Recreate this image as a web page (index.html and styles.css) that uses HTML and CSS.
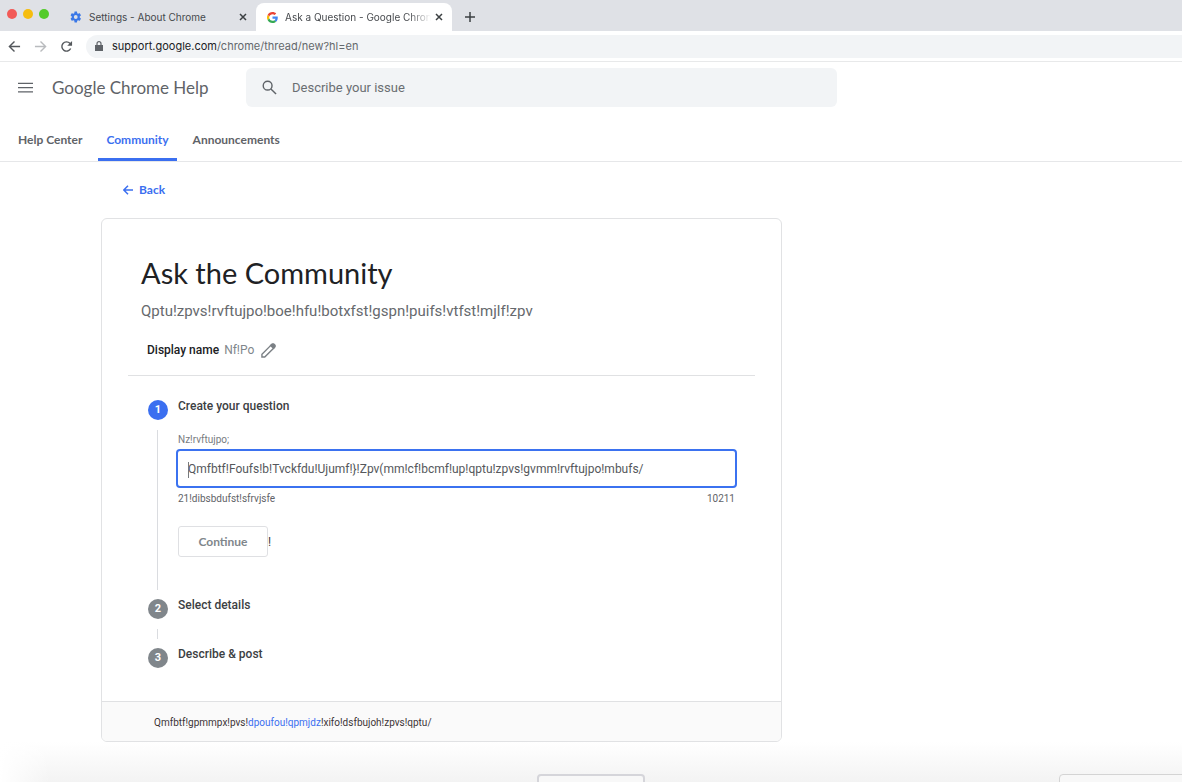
FILE: index.html
```html
<!DOCTYPE html>
<html lang="en">
<head>
<meta charset="utf-8">
<title>Ask a Question - Google Chrome Community</title>
<link rel="stylesheet" href="styles.css">
</head>
<body>
<div class="tabstrip">
  <div class="lights"><i class="light red"></i><i class="light yellow"></i><i class="light green"></i></div>
  <div class="tab">
    <svg class="favicon" viewBox="0 0 24 24"><path fill="#3b78e7" d="M19.4 13c0-.3.1-.6.1-1s0-.7-.1-1l2.300-1.800c.2-.2.3-.5.100-.7l-2.200-3.800c-.1-.2-.4-.3-.7-.2l-2.700 1.100c-.6-.4-1.200-.8-1.800-1L14 1.500c0-.3-.3-.5-.5-.5h-4c-.3 0-.5.200-.5.500l-.4 3.100c-.6.200-1.200.600-1.800 1L4.100 4.500c-.2-.1-.5 0-.7.200L1.300 8.500c-.1.200-.1.500.1.700L3.600 11c0 .3-.1.700-.1 1s0 .7.100 1l-2.200 1.800c-.2.200-.2.500-.1.700l2.100 3.800c.1.200.4.300.7.200l2.700-1.100c.6.400 1.200.8 1.800 1l.4 3.100c0 .3.200.5.500.5h4c.300 0 .500-.2.500-.5l.4-3.100c.6-.2 1.200-.6 1.800-1l2.700 1.100c.2.100.5 0 .7-.2l2.200-3.800c.1-.2.100-.5-.1-.7zM11.500 15.800a3.800 3.800 0 1 1 0-7.600 3.800 3.800 0 0 1 0 7.600z"/></svg>
    <span class="tab-title">Settings - About Chrome</span>
    <button class="close" aria-label="Close tab"><svg viewBox="0 0 8 8"><path d="M1 1l6 6M7 1l-6 6"/></svg></button>
  </div>
  <div class="tab active">
    <svg class="favicon" viewBox="0 0 48 48"><path fill="#ea4335" d="M24 9.500c3.540 0 6.710 1.220 9.210 3.600l6.850-6.850C35.900 2.380 30.470 0 24 0 14.620 0 6.510 5.380 2.560 13.220l7.980 6.190C12.430 13.720 17.740 9.500 24 9.500z"/><path fill="#4285f4" d="M46.980 24.550c0-1.570-.15-3.090-.38-4.550H24v9.020h12.940c-.58 2.960-2.260 5.480-4.780 7.180l7.730 6c4.510-4.180 7.090-10.360 7.090-17.650z"/><path fill="#fbbc05" d="M10.530 28.590a14.500 14.500 0 0 1 0-9.180l-7.980-6.190a24 24 0 0 0 0 21.560z"/><path fill="#34a853" d="M24 48c6.480 0 11.930-2.130 15.890-5.810l-7.730-6c-2.150 1.450-4.920 2.300-8.160 2.300-6.260 0-11.570-4.220-13.470-9.910l-7.980 6.190C6.510 42.620 14.620 48 24 48z"/></svg>
    <span class="tab-title fade">Ask a Question - Google Chron</span>
    <button class="close" aria-label="Close tab"><svg viewBox="0 0 8 8"><path d="M1 1l6 6M7 1l-6 6"/></svg></button>
  </div>
  <button class="new-tab" aria-label="New tab"><svg viewBox="0 0 10 10"><path d="M5 0v10M0 5h10"/></svg></button>
</div>
<div class="toolbar">
  <button class="nav" aria-label="Back"><svg viewBox="0 0 14 14"><path d="M13 7H2M7 1.500L1.500 7 7 12.500"/></svg></button>
  <button class="nav dim" aria-label="Forward"><svg viewBox="0 0 14 14"><path d="M1 7h11M7 1.500L12.500 7 7 12.500"/></svg></button>
  <button class="nav" aria-label="Reload"><svg viewBox="0 0 14 14"><path d="M11.500 9.200A5 5 0 1 1 10.700 3.600L12 5"/><path class="solid" d="M13 1v5.200H7.800z"/></svg></button>
  <div class="omnibox">
    <svg class="lock" viewBox="0 0 8 10"><path d="M0 4h8v6H0z" fill="#5f6368"/><path d="M2 4V2.700a2 2 0 0 1 4 0V4" fill="none" stroke="#5f6368" stroke-width="1.200"/></svg>
    <span class="url"><b>support.google.com</b>/chrome/thread/new?hl=en</span>
  </div>
</div>

<header class="header">
  <button class="menu" aria-label="Main menu"><svg viewBox="0 0 16 12"><path d="M0 1.500h16M0 6h16M0 10.500h16"/></svg></button>
  <span class="product">Google Chrome Help</span>
  <label class="search">
    <svg viewBox="0 0 16 16"><circle cx="6" cy="6" r="4.700"/><path d="M9.500 9.500l5.500 5.500"/></svg>
    <input type="text" placeholder="Describe your issue" aria-label="Describe your issue">
  </label>
</header>
<nav class="sections">
  <a href="#">Help Center</a>
  <a href="#" class="current">Community</a>
  <a href="#">Announcements</a>
</nav>

<main class="main">
  <a href="#" class="back"><svg viewBox="0 0 10 10"><path d="M10 5H1M5 .8L.8 5 5 9.200"/></svg>Back</a>
  <section class="card">
    <div class="intro">
      <h1>Ask the Community</h1>
      <p class="lead">Qptu!zpvs!rvftujpo!boe!hfu!botxfst!gspn!puifs!vtfst!mjlf!zpv</p>
    </div>
    <div class="identity">
      <span class="strong">Display name</span><span class="name">Nf!Po</span>
      <button class="edit" aria-label="Edit display name"><svg viewBox="0 0 16 16"><path d="M1 15v-3L11 2l3 3L4 15z"/><path d="M10.300 2.700L12 1h1.500L15 2.500V4l-1.700 1.700z" class="tip"/></svg></button>
    </div>
    <ol class="steps">
      <li class="step">
        <div class="rail"><span class="badge on">1</span><i class="line"></i></div>
        <div class="body">
          <h2>Create your question</h2>
          <label class="label" for="question">Nz!rvftujpo;</label>
          <div class="field"><input id="question" type="text" value="Qmfbtf!Foufs!b!Tvckfdu!Ujumf!}!Zpv(mm!cf!bcmf!up!qptu!zpvs!gvmm!rvftujpo!mbufs/"><i class="caret"></i></div>
          <div class="hint"><span>21!dibsbdufst!sfrvjsfe</span><span>10211</span></div>
          <div class="actions"><button class="continue">Continue</button><span>!</span></div>
        </div>
      </li>
      <li class="step">
        <div class="rail"><span class="badge">2</span><i class="line"></i></div>
        <div class="body"><h2>Select details</h2></div>
      </li>
      <li class="step">
        <div class="rail"><span class="badge">3</span></div>
        <div class="body"><h2>Describe &amp; post</h2></div>
      </li>
    </ol>
    <footer class="policy">Qmfbtf!gpmmpx!pvs!<a href="#">dpoufou!qpmjdz</a>!xifo!dsfbujoh!zpvs!qptu/</footer>
  </section>
</main>
<div class="dock"><i class="peek"></i><i class="peek side"></i></div>
</body>
</html>
```
FILE: styles.css
```css
* { box-sizing: border-box; }
html, body { height: 100%; }
body {
  margin: 0;
  display: flex;
  flex-direction: column;
  overflow: hidden;
  background: #fff;
  color: #3c4043;
  font-family: Roboto, sans-serif;
  font-size: 12px;
}
button { padding: 0; border: 0; background: none; font: inherit; color: inherit; }
input { font: inherit; color: inherit; }
a { color: #3b6ff0; text-decoration: none; }
svg { display: block; fill: none; stroke-width: 1.500; }
h1, h2, p, ol { margin: 0; padding: 0; }

/* Browser chrome */
.tabstrip { display: flex; flex: none; height: 31px; background: #dfe1e6; font-family: Inter, sans-serif; font-size: 10px; }
.lights { display: flex; gap: 6px; width: 62px; padding: 9px 0 0 7px; }
.light { width: 10px; height: 10px; border-radius: 50%; }
.red { background: #f25a57; }
.yellow { background: #f6bd0f; }
.green { background: #53cb2a; }
.tab { display: flex; align-items: center; width: 194px; padding: 3px 9px 0 8px; }
.active { width: 196px; margin-top: 3px; padding-top: 0; padding-left: 11px; background: #fff; border-radius: 8px 8px 0 0; }
.favicon { flex: none; width: 12px; height: 12px; margin-right: 7px; stroke: none; }
.active .favicon { width: 11px; height: 11px; }
.tab-title { flex: 1; min-width: 0; overflow: hidden; white-space: nowrap; color: #46494d; }
.fade { mask-image: linear-gradient(to right, #000 85%, transparent); }
.close { width: 8px; height: 8px; margin-left: 4px; }
.close svg, .new-tab svg { width: 100%; height: 100%; stroke: #3c4043; }
.new-tab { width: 10px; height: 10px; margin: 12px 0 0 13px; }
.toolbar { display: flex; flex: none; align-items: center; gap: 13px; height: 31px; padding-left: 8px; background: #fff; border-bottom: 1px solid #e8e9ea; }
.nav { width: 13px; height: 13px; stroke: #54585c; }
.nav svg { width: 13px; height: 13px; }
.dim { stroke: #b9bbbe; }
.solid { fill: #54585c; stroke: none; }
.omnibox { display: flex; flex: 1; align-items: center; gap: 9px; height: 23px; padding-left: 9px; background: #f2f4f6; border-radius: 12px 0 0 12px; font-family: Inter, sans-serif; font-size: 11px; color: #64686c; }
.omnibox b { font-weight: 400; color: #202124; }
.lock { width: 8px; height: 10px; }

/* Help site header */
.header { display: flex; flex: none; align-items: center; height: 51px; padding-left: 18px; }
.menu { width: 15px; height: 12px; stroke: #5f6368; }
.product { width: 194px; margin-left: 19px; font-family: Lato, sans-serif; font-size: 17px; color: #5f6368; white-space: nowrap; }
.search { display: flex; flex: 0 1 591px; align-items: center; gap: 15px; height: 39px; padding-left: 16px; border-radius: 6px; background: #f2f4f6; color: #5f6368; }
.search svg { width: 15px; height: 15px; stroke: #5f6368; }
.search input { flex: 1; border: 0; background: none; outline: 0; padding: 0; font-size: 13px; }
.search input::placeholder { color: #6a6e72; opacity: 1; }
.sections { display: flex; flex: none; gap: 8px; height: 49px; padding-left: 10px; border-bottom: 1px solid #e6e7e9; font-family: Lato, sans-serif; font-size: 12px; font-weight: 700; }
.sections a { padding: 19px 8px 0; line-height: 16px; color: #5f6368; white-space: nowrap; }
.sections .current { color: #3b6ff0; box-shadow: inset 0 -3px #3b6ff0; border-radius: 3px 3px 0 0; }

/* Question form */
.main { width: 681px; max-width: calc(100% - 116px); margin-left: 101px; }
.back { display: flex; align-items: center; gap: 6px; width: fit-content; margin: 20px 0 20px 22px; font-family: Lato, sans-serif; font-size: 12px; font-weight: 700; line-height: 16px; }
.back svg { width: 10px; height: 10px; stroke: #3b6ff0; }
.card { border: 1px solid #e1e2e4; border-radius: 6px; overflow: hidden; }
.intro { padding: 36px 39px 0; }
h1 { font-family: Lato, sans-serif; font-size: 29px; font-weight: 400; line-height: 36px; color: #202124; }
.lead { margin-top: 10px; font-size: 15px; line-height: 20px; color: #66696d; }
.identity { display: flex; align-items: center; margin: 16px 26px 24px; padding: 2px 19px 14px; border-bottom: 1px solid #e0e1e3; line-height: 22px; }
.strong { font-weight: 500; color: #202124; }
.name { margin: 0 7px 0 5px; color: #80868b; }
.edit { width: 15px; height: 15px; stroke: #7b8085; }
.tip { fill: #7b8085; }
.steps { padding: 0 46px 33px; list-style: none; }
.step { display: flex; gap: 10px; }
.rail { display: flex; flex-direction: column; align-items: center; width: 20px; }
.badge { width: 20px; height: 20px; border-radius: 50%; background: #80868b; color: #fff; font-size: 11px; font-weight: 700; line-height: 20px; text-align: center; }
.on { background: #3b6ff0; }
.line { flex: 1; width: 1px; min-height: 10px; margin: 10px 1px 9px 0; background: #dadce0; }
.body { flex: 1; min-width: 0; }
h2 { font-size: 12px; font-weight: 500; line-height: 12px; color: #3c4043; }
.label { display: block; margin-top: 21px; font-size: 10px; line-height: 14px; color: #777b80; }
.field { position: relative; margin: 2px -2px 4px; }
.field input { display: block; width: 100%; height: 39px; padding: 0 10px; border: 2px solid #3b72f0; border-radius: 4px; outline: 0; background: #fff; color: #55585c; font-size: 12px; }
.caret { position: absolute; left: 12px; top: 13px; width: 1px; height: 16px; background: #77797c; }
.hint { display: flex; justify-content: space-between; font-size: 10px; line-height: 14px; color: #5f6368; }
.actions { display: flex; align-items: center; margin: 20px 0 42px; }
.continue { width: 90px; height: 31px; border: 1px solid #dfe0e3; border-radius: 3px; font-family: Lato, sans-serif; font-weight: 700; font-size: 12px; color: #80868b; }
.policy { padding: 13px 52px 11px; border-top: 1px solid #e0e1e3; background: #fafafa; font-size: 10px; line-height: 15px; color: #3c3436; }

/* Edge of the panel below the window */
.dock { display: flex; flex: 1; min-height: 8px; padding-top: 32px; background: linear-gradient(to right, #fff, transparent 50px), linear-gradient(#fff, #f3f3f3); }
.peek { width: 108px; height: 24px; margin-left: 537px; border: 2px solid #d5d5da; border-radius: 4px; background: #f8f8f8; }
.side { flex: 1; margin-left: 414px; margin-right: -8px; border: 1px solid #d4d4d4; }
```
